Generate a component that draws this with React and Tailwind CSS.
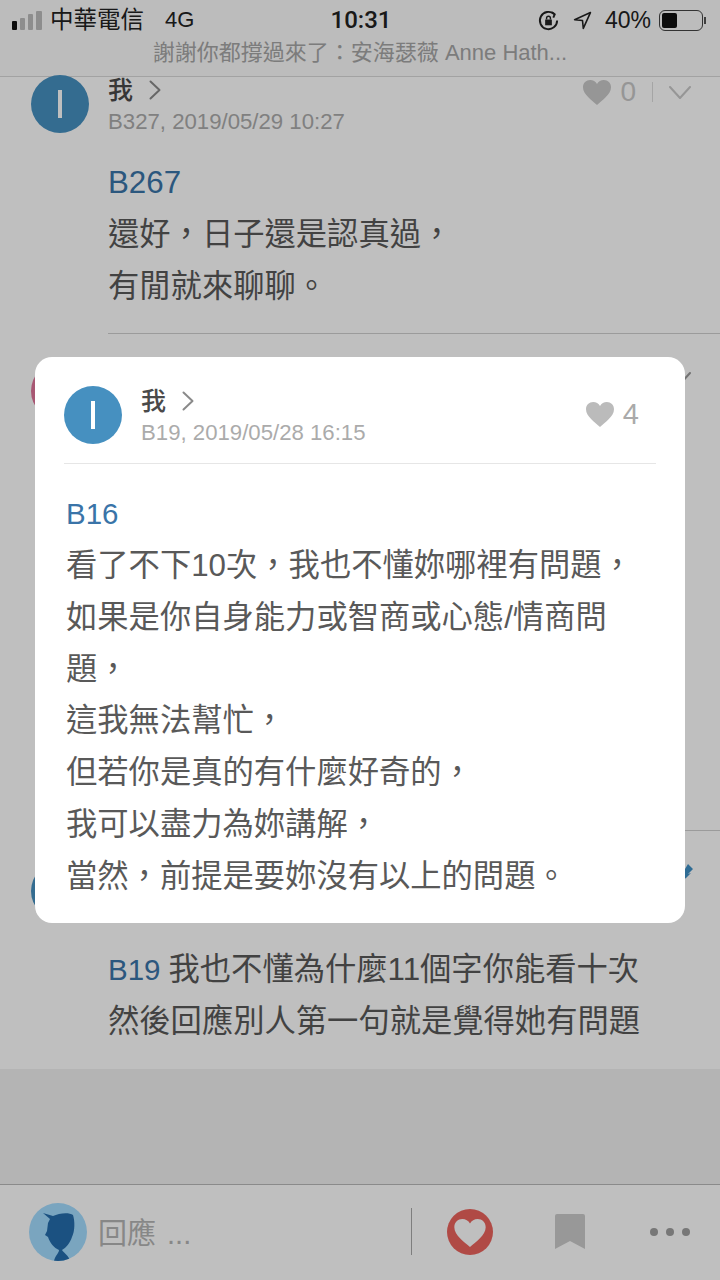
import React from "react";

const Heart = ({ className }) => (
  <svg viewBox="0 0 28 25" className={className} fill="currentColor">
    <path d="M14 25C9 20.5 0 14.5 0 7.3 0 3 3.2 0 7.2 0 10 0 12.6 1.5 14 4 15.4 1.500 18 0 20.800 0 24.800 0 28 3 28 7.300 28 14.500 19 20.500 14 25Z" />
  </svg>
);
const Chevron = ({ className }) => (
  <svg viewBox="0 0 12 20" className={className} fill="none" stroke="currentColor" strokeWidth="2" strokeLinecap="round" strokeLinejoin="round">
    <path d="M1.500 1.500 10.500 10 1.500 18.500" />
  </svg>
);
const ChevronDown = ({ className }) => (
  <svg viewBox="0 0 22 13" className={className} fill="none" stroke="currentColor" strokeWidth="2" strokeLinecap="round" strokeLinejoin="round">
    <path d="M1 1 11 12 21 1" />
  </svg>
);
const Avatar = ({ className }) => (
  <div className={`w-[58px] h-[58px] rounded-full shrink-0 flex items-center justify-center ${className}`}>
    <div className="w-[4px] h-[28px] bg-white" />
  </div>
);
const Name = ({ meta }) => (
  <div className="flex flex-col">
    <div className="flex items-center gap-[16px] h-[30px]">
      <span className="text-[25px] leading-[30px] font-medium text-[#4a4a4a]">我</span>
      <Chevron className="w-[12px] h-[20px] text-[#8a8a8a]" />
    </div>
    <div className="text-[22.200px] leading-[26px] mt-[4px] text-[#ababab]">{meta}</div>
  </div>
);

export default function App() {
  return (
    <div className="relative w-[720px] h-[1280px] overflow-hidden bg-white flex flex-col font-['Liberation_Sans','Noto_Sans_CJK_TC',sans-serif]">
      <header className="h-[77px] shrink-0 border-b border-[#d8d8d8] bg-[#fbfbfb] flex flex-col">
        <div className="h-[40px] flex items-center justify-between pl-[12px] pr-[14px]">
          <div className="flex items-center w-[260px]">
            <div className="flex items-end gap-[3px] h-[19px]">
              <span className="w-[5px] h-[9px] rounded-[1px] bg-[#111111]" />
              <span className="w-[5px] h-[12px] rounded-[1px] bg-[#bdbdbd]" />
              <span className="w-[5px] h-[16px] rounded-[1px] bg-[#bdbdbd]" />
              <span className="w-[6px] h-[19px] rounded-[1px] bg-[#bdbdbd]" />
            </div>
            <span className="ml-[8px] text-[23.500px] leading-[30px] text-[#222222]">中華電信</span>
            <span className="ml-[21px] text-[22px] leading-[30px] text-[#222222]">4G</span>
          </div>
          <div className="text-[24px] font-medium font-['Roboto',sans-serif] pl-[4px] leading-[30px] text-[#222222]">10:31</div>
          <div className="flex items-center justify-end w-[260px] text-[#222222]">
            <svg viewBox="0 0 24 24" className="w-[23px] h-[23px]" fill="none" stroke="currentColor" strokeWidth="2">
              <path d="M21 12a9 9 0 1 1-3-6.700" />
              <path d="M15.500 3.500 18.500 5.500 17 9" />
              <rect x="8.500" y="11" width="7" height="6" fill="currentColor" stroke="none" />
              <path d="M10 11V9.500a2 2 0 0 1 4 0V11" strokeWidth="1.500" />
            </svg>
            <svg viewBox="0 0 24 24" className="w-[19px] h-[19px] ml-[13px]" fill="none" stroke="currentColor" strokeWidth="2" strokeLinejoin="round">
              <path d="M22 2 2 11l10 1 1 10Z" />
            </svg>
            <span className="ml-[13px] text-[23px] leading-[30px]">40%</span>
            <div className="ml-[8px] w-[44px] h-[21px] rounded-[6px] border border-[#444444] p-[2px]">
              <div className="w-[15px] h-full rounded-[2px] bg-[#111111]" />
            </div>
            <div className="w-[2px] h-[7px] ml-[1px] bg-[#555555]" />
          </div>
        </div>
        <div className="text-center text-[22px] leading-[26px] text-[#a6a6a6]">謝謝你都撐過來了：安海瑟薇 Anne Hath...</div>
      </header>

      <main className="flex-1 flex flex-col min-h-0">
        <article className="h-[257px] shrink-0 relative flex">
          <div className="pl-[31px] -mt-[2px]"><Avatar className="bg-[#4690c0]" /></div>
          <div className="flex-1 ml-[19px] -mt-[2px]">
            <Name meta="B327, 2019/05/29 10:27" />
            <div className="mt-[22px] text-[31.300px] leading-[52px] text-[#595959]">
              <div className="text-[#3a74a8]">B267</div>
              <div>還好，日子還是認真過，</div>
              <div>有閒就來聊聊。</div>
            </div>
            <div className="mt-[20px] h-px bg-[#cfcfcf]" />
          </div>
          <div className="absolute right-[29px] top-[0px] flex items-center text-[#c8c8c8]">
            <Heart className="w-[28px] h-[25px]" />
            <span className="ml-[9px] text-[28px] leading-[30px]">0</span>
            <div className="ml-[16px] w-px h-[20px] bg-[#dddddd]" />
            <ChevronDown className="ml-[16px] w-[22px] h-[13px]" />
          </div>
        </article>

        <article className="h-[497px] shrink-0 flex relative">
          <div className="pl-[31px] mt-[28px]"><Avatar className="bg-[#e0749a]" /></div>
          <div className="flex-1 ml-[19px] flex flex-col justify-end">
            <div className="h-px bg-[#cfcfcf]" />
          </div>
          <ChevronDown className="absolute right-[29px] top-[38px] w-[22px] h-[13px] text-[#9a9a9a]" />
        </article>

        <article className="h-[238px] shrink-0 flex relative">
          <div className="pl-[31px] mt-[31px]"><Avatar className="bg-[#4690c0]" /></div>
          <div className="flex-1 ml-[19px] pt-[113px] text-[31.300px] leading-[52px] text-[#595959]">
            <div><span className="text-[#3a74a8] text-[29.500px] mr-[8px]">B19</span>我也不懂為什麼11個字你能看十次</div>
            <div>然後回應別人第一句就是覺得她有問題</div>
          </div>
          <svg viewBox="0 0 14 18" className="absolute right-[26px] top-[33px] w-[14px] h-[18px] text-[#3f90c6]" fill="currentColor">
            <path d="M8 0 13 5 8 10 11 9 6 14 0 18 1 11 5 5Z" />
          </svg>
        </article>

        <div className="flex-1 bg-[#f0f0f0]" />

        <footer className="h-[96px] shrink-0 border-t border-[#b8b8b8] bg-white flex items-center pl-[29px] pr-[30px] pb-[2px]">
          <div className="w-[58px] h-[58px] rounded-full overflow-hidden bg-[#a3dcff] shrink-0">
            <svg viewBox="0 0 58 58" className="w-[58px] h-[58px] text-[#256dad]" fill="currentColor">
              <path d="M14 10 24 13C30 10 40 9 44 12 46 18 46 28 43 34 41 40 37 45 33 47 35 50 40 53 41 58H25C26 53 30 50 30 47 25 45 21 40 19 34L16 32 18 28 19 20 21 16Z" />
            </svg>
          </div>
          <div className="ml-[11px] mt-[5px] flex-1 text-[29px] leading-[34px] text-[#b5b5b5]">回應 <span className="ml-[3px]">...</span></div>
          <div className="w-px h-[47px] bg-[#a8a8a8]" />
          <div className="ml-[35px] w-[46px] h-[46px] rounded-full bg-[#eb635d] flex items-center justify-center">
            <Heart className="w-[32px] h-[28px] text-white mt-[2px]" />
          </div>
          <svg viewBox="0 0 30 36" className="ml-[62px] w-[30px] h-[36px] text-[#cbcbcb]" fill="currentColor">
            <path d="M2 0H28A2 2 0 0 1 30 2V35L15 27 0 35V2A2 2 0 0 1 2 0Z" />
          </svg>
          <div className="ml-[65px] flex gap-[8px]">
            <span className="w-[8px] h-[8px] rounded-full bg-[#9f9f9f]" />
            <span className="w-[8px] h-[8px] rounded-full bg-[#9f9f9f]" />
            <span className="w-[8px] h-[8px] rounded-full bg-[#9f9f9f]" />
          </div>
        </footer>
      </main>

      <div className="absolute inset-0 bg-black/25" />

      <section className="absolute left-[35px] top-[357px] w-[650px] h-[566px] rounded-[17px] bg-white px-[29px] pt-[29px]">
        <div className="flex items-start pb-[17px] border-b border-[#e6e6e6] relative">
          <Avatar className="bg-[#4690c0]" />
          <div className="ml-[19px]"><Name meta="B19, 2019/05/28 16:15" /></div>
          <div className="absolute right-[17px] top-[13px] flex items-center text-[#bbbbbb]">
            <Heart className="w-[28px] h-[25px]" />
            <span className="ml-[9px] text-[29px] leading-[30px] text-[#aaaaaa]">4</span>
          </div>
        </div>
        <div className="pl-[2px] mt-[24px] text-[31.300px] leading-[51.850px] text-[#595959]">
          <div className="text-[#3a74a8] text-[29.500px]">B16</div>
          <div>看了不下10次，我也不懂妳哪裡有問題，</div>
          <div>如果是你自身能力或智商或心態/情商問<br />題，</div>
          <div>這我無法幫忙，</div>
          <div>但若你是真的有什麼好奇的，</div>
          <div>我可以盡力為妳講解，</div>
          <div>當然，前提是要妳沒有以上的問題。</div>
        </div>
      </section>
    </div>
  );
}
